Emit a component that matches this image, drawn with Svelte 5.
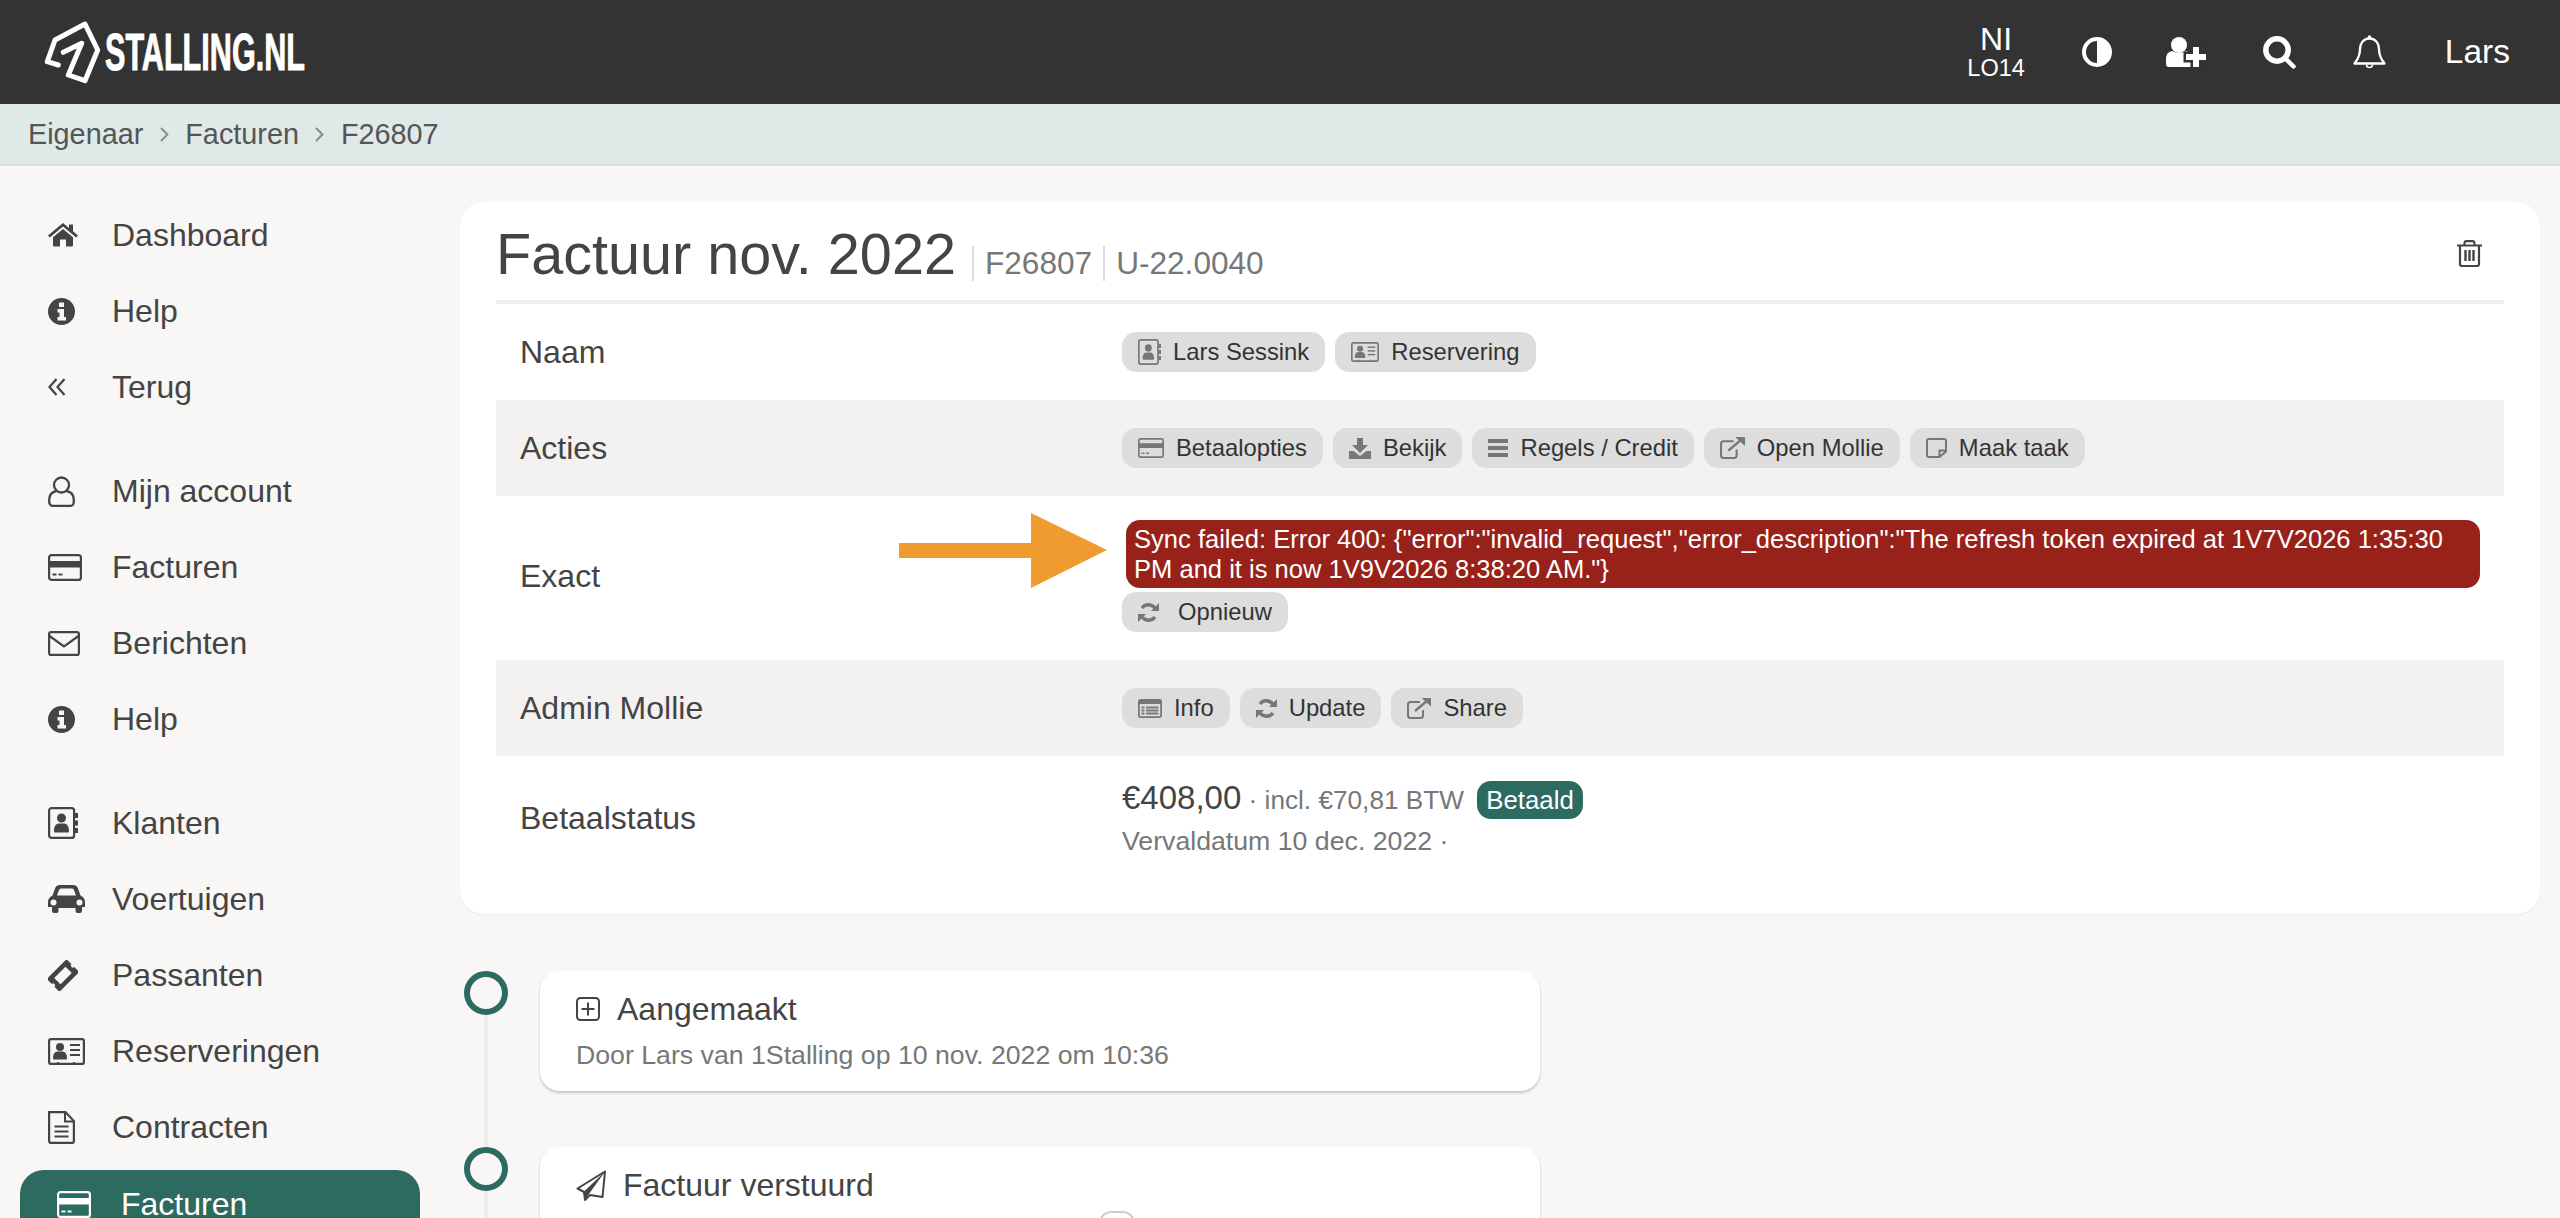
<script>
  const bg = '#f8f7f5';
  const icons = {
    home: [30, 24, `<path d="M15 0 0 12.5l1.8 2.1L15 3.6l13.2 11 1.8-2.1-5-4.2V1.500h-4v3.400z"/><path d="M15 6 5 14.300V22.500a1 1 0 0 0 1 1h6v-7h6v7h6a1 1 0 0 0 1-1V14.300z"/>`],
    info: [27, 27, `<circle cx="13.500" cy="13.500" r="13.500"/><rect x="11" y="4.500" width="5" height="4.500" fill="${bg}"/><path fill="${bg}" d="M9.500 11H16v8h2v3.500H9.500V19h2v-4.500h-2z"/>`],
    back: [18, 18, `<path fill="none" stroke="currentColor" stroke-width="2.200" d="M8.500 1 1.500 9l7 8M16.500 1l-7 8 7 8"/>`],
    user: [27, 31, `<g fill="none" stroke="currentColor" stroke-width="2.300"><circle cx="13.500" cy="9" r="7.500"/><path d="M8.500 15C3 16 1.200 20 1.200 24v2a4 4 0 0 0 4 4h16.600a4 4 0 0 0 4-4v-2c0-4-1.800-8-7.300-9"/></g>`],
    card: [34, 27, `<rect x="1.100" y="1.100" width="31.800" height="24.800" rx="2.500" fill="none" stroke="currentColor" stroke-width="2.200"/><rect x="1" y="7" width="32" height="6.500"/><rect x="4.500" y="19.500" width="4" height="2"/><rect x="10.500" y="19.500" width="4" height="2"/>`],
    mail: [32, 25, `<rect x="1.100" y="1.100" width="29.800" height="22.800" rx="2" fill="none" stroke="currentColor" stroke-width="2.200"/><path fill="none" stroke="currentColor" stroke-width="2.200" d="M1.500 5 16 15.500 30.500 5"/>`],
    book: [30, 32, `<rect x="1.100" y="1.100" width="25" height="29.800" rx="2.500" fill="none" stroke="currentColor" stroke-width="2.200"/><rect x="27" y="6" width="3" height="5"/><rect x="27" y="13.500" width="3" height="5"/><rect x="27" y="21" width="3" height="5"/><circle cx="13.500" cy="11" r="4.500"/><path d="M6 24c0-6 3-7 4-7.500h7c1 .5 4 1.500 4 7.500q0 1.500-1 1.500H7q-1 0-1-1.500z"/>`],
    car: [37, 28, `<path d="M7 3.500Q8 0 12 0h13q4 0 5 3.500l2.500 7q4.500 2 4.500 6.500v5h-3v4q0 2-2 2h-2.500q-2 0-2-2v-3H10.500v3q0 2-2 2H6q-2 0-2-2v-4H0v-5q0-4.500 4.500-6.500z"/><path fill="${bg}" d="M9 10.500 11 5q.4-1.500 2-1.500h11q1.600 0 2 1.500l2 5.500z"/><circle cx="5.500" cy="17.500" r="3" fill="${bg}"/><circle cx="31.500" cy="17.500" r="3" fill="${bg}"/>`],
    ticket: [30, 31, `<g transform="rotate(-45 15 15.500)"><rect x="1" y="6.500" width="28" height="18" rx="1.500"/><rect x="7" y="11" width="16" height="9" fill="${bg}"/><circle cx="1" cy="15.500" r="2" fill="${bg}"/><circle cx="29" cy="15.500" r="2" fill="${bg}"/></g>`],
    idcard: [37, 27, `<rect x="1.100" y="1.100" width="34.800" height="24.800" rx="2" fill="none" stroke="currentColor" stroke-width="2.200"/><circle cx="12" cy="9" r="4"/><path d="M5 20c0-5 2.500-6 4-6.500h6c1.500.5 4 1.500 4 6.500q0 1.500-1 1.500H6q-1 0-1-1.500z"/><rect x="22" y="6" width="10" height="2"/><rect x="22" y="11" width="10" height="2"/><rect x="22" y="16" width="10" height="2"/><rect x="9" y="24" width="2" height="3"/><rect x="25" y="24" width="2" height="3"/>`],
    file: [27, 33, `<path fill="none" stroke="currentColor" stroke-width="2.200" d="M1.100 1.100h16.400l8.400 9v20a1.800 1.800 0 0 1-1.800 1.800H2.900a1.800 1.800 0 0 1-1.800-1.800z"/><path fill="none" stroke="currentColor" stroke-width="2" d="M17 1.500V10.500h8.500M6.500 15.500h14M6.500 20.500h14M6.500 25.500h14"/>`],
    contrast: [30, 30, `<circle cx="15" cy="15" r="15"/><path fill="#333" d="M15 4a11 11 0 0 0 0 22z"/>`],
    userplus: [40, 30, `<circle cx="13" cy="8" r="8"/><path d="M0 27v-5q0-7 6-8 7 4 14 0 6 1 6 8v8H3q-3 0-3-3z"/><path stroke="#333" stroke-width="5" paint-order="stroke" d="M27 10h6v7h7v6h-7v7h-6v-7h-7v-6h7z"/>`],
    search: [33, 33, `<g fill="none" stroke="currentColor"><circle cx="14" cy="14" r="11.200" stroke-width="5.500"/><path stroke-width="4.500" stroke-linecap="round" d="M23 23l7.500 7.500"/></g>`],
    bell: [33, 35, `<circle cx="16.500" cy="2" r="1.800"/><path fill="none" stroke="currentColor" stroke-width="2.300" stroke-linejoin="round" d="M16.500 3.500C10 3.500 7 9 7 14c0 8-3 11-5.500 14.500h30C29 25 26 22 26 14c0-5-3-10.500-9.500-10.500z"/><path fill="none" stroke="currentColor" stroke-width="1.600" d="M13.500 29.500a3 3 0 0 0 6 0"/>`],
    trash: [25, 27, `<g fill="none" stroke="currentColor" stroke-width="2.200"><path d="M0 5.500h25M7.500 5V3.200q0-2.100 2.100-2.100h5.800q2.100 0 2.100 2.100V5"/><path d="M3 5.500v18.500q0 2 2 2h15q2 0 2-2V5.500"/><path stroke-width="2.400" d="M8.500 10v11M12.500 10v11M16.500 10v11"/></g>`],
    download: [22, 21, `<path d="M8 0h6v7h5l-8 8-8-8h5z"/><path d="M0 13h4.500l6.500 5 6.500-5H22v8H0z"/>`],
    bars: [20, 18, `<rect width="20" height="4"/><rect y="7" width="20" height="4"/><rect y="14" width="20" height="4"/>`],
    open: [24, 21, `<g fill="none" stroke="currentColor" stroke-width="2"><path d="M13 4H3.500Q1 4 1 6.500V17.500Q1 20 3.500 20h10q2.500 0 2.500-2.500V12"/><path stroke-width="2.400" d="M8 13 21 2"/></g><path d="M14.500 0H24v8.500z"/>`],
    note: [21, 20, `<path fill="none" stroke="currentColor" stroke-width="2" d="M1 3q0-2 2-2h15q2 0 2 2v10.500L13.500 19H3q-2 0-2-2zM20 12.500h-6.500V19"/>`],
    refresh: [21, 21, `<g fill="none" stroke="currentColor" stroke-width="3.500"><path d="M18 8.500A8 8 0 0 0 4 6"/><path d="M3 12.500A8 8 0 0 0 17 15"/></g><path d="M21 1v8h-8zM0 20v-8h8z"/>`],
    list: [24, 19, `<rect x=".9" y=".9" width="22.200" height="17.200" rx="1.500" fill="none" stroke="currentColor" stroke-width="1.800"/><rect x="1" y="1" width="22" height="4"/><path d="M3.500 7.500h3v2h-3zM8 7.500h12.500v2H8zM3.500 10.500h3v2h-3zM8 10.500h12.500v2H8zM3.500 13.500h3v2h-3zM8 13.500h12.500v2H8z"/>`],
    plus: [24, 24, `<rect x="1" y="1" width="22" height="22" rx="3.500" fill="none" stroke="currentColor" stroke-width="2"/><path fill="none" stroke="currentColor" stroke-width="2" d="M12 5.500v13M5.500 12h13"/>`],
    plane: [30, 31, `<path fill="none" stroke="currentColor" stroke-width="2" stroke-linejoin="round" d="M29 1.500 1.500 18.500 8 22l1 8 5-5 12.500 2z"/><path d="M29 1.500 7.500 22 9 30l4-6z"/>`]
  };

  const nav = [
    [['home', 'Dashboard'], ['info', 'Help'], ['back', 'Terug']],
    [['user', 'Mijn account'], ['card', 'Facturen'], ['mail', 'Berichten'], ['info', 'Help']],
    [['book', 'Klanten'], ['car', 'Voertuigen'], ['ticket', 'Passanten'], ['idcard', 'Reserveringen'], ['file', 'Contracten']]
  ];
  const naam = [['book', 23, 26, 'Lars Sessink'], ['idcard', 28, 20, 'Reservering']];
  const acties = [['card', 26, 20, 'Betaalopties'], ['download', 22, 21, 'Bekijk'], ['bars', 20, 18, 'Regels / Credit'], ['open', 25, 22, 'Open Mollie'], ['note', 21, 20, 'Maak taak']];
  const mollie = [['list', 24, 19, 'Info'], ['refresh', 21, 21, 'Update'], ['open', 24, 21, 'Share']];
  const error = 'Sync failed: Error 400: {"error":"invalid_request","error_description":"The refresh token expired at 1V7V2026 1:35:30 PM and it is now 1V9V2026 8:38:20 AM."}';
</script>

{#snippet icon(name, w, h)}
  <svg class="ic" width={w ?? icons[name][0]} height={h ?? icons[name][1]} viewBox="0 0 {icons[name][0]} {icons[name][1]}" fill="currentColor" preserveAspectRatio="none">{@html icons[name][2]}</svg>
{/snippet}

{#snippet btn(b)}
  <span class="btn">{@render icon(b[0], b[1], b[2])}<span>{b[3]}</span></span>
{/snippet}

<div class="page">
  <header class="top">
    <svg class="logo" width="58" height="65" viewBox="44 20 58 65" fill="none" stroke="#fff" stroke-width="5" stroke-linejoin="round" stroke-linecap="round">
      <path d="M58.300 65 47.300 61.700 55 40 85 24l12.700 26L85 80.700 68.300 75l13.400-31.700-18.400 9"/>
    </svg>
    <span class="brand">STALLING.NL</span>
    <div class="tools">
      <div class="loc"><span class="ni">NI</span><span class="lo">LO14</span></div>
      <span class="half">{@render icon('contrast')}</span>
      {@render icon('userplus')}
      {@render icon('search')}
      <span class="bell">{@render icon('bell')}</span>
      <span class="who">Lars</span>
    </div>
  </header>

  <nav class="crumbs">
    <span>Eigenaar</span>
    <svg class="chev" width="9" height="15" viewBox="0 0 9 15"><path d="M1 1l6.500 6.500L1 14" fill="none" stroke="#888" stroke-width="1.800"/></svg>
    <span>Facturen</span>
    <svg class="chev" width="9" height="15" viewBox="0 0 9 15"><path d="M1 1l6.500 6.500L1 14" fill="none" stroke="#888" stroke-width="1.800"/></svg>
    <span>F26807</span>
  </nav>

  <div class="body">
    <aside class="side">
      {#each nav as group}
        <ul class="group">
          {#each group as item}
            <li class="item"><span class="slot">{@render icon(item[0])}</span>{item[1]}</li>
          {/each}
        </ul>
      {/each}
      <div class="item active"><span class="slot">{@render icon('card')}</span>Facturen</div>
    </aside>

    <main class="content">
      <section class="sheet">
        <div class="head">
          <h1>Factuur nov. 2022</h1>
          <span class="code first">F26807</span>
          <span class="code">U-22.0040</span>
          <span class="del">{@render icon('trash')}</span>
        </div>

        <div class="row">
          <div class="label">Naam</div>
          <div class="val btns">{#each naam as b}{@render btn(b)}{/each}</div>
        </div>
        <div class="row alt">
          <div class="label">Acties</div>
          <div class="val btns">{#each acties as b}{@render btn(b)}{/each}</div>
        </div>
        <div class="row exact">
          <div class="label">Exact</div>
          <div class="val">
            <div class="err">{error}</div>
            <span class="btn retry">{@render icon('refresh')}<span>Opnieuw</span></span>
          </div>
          <svg class="arrow" width="208" height="75" viewBox="0 0 208 75"><path d="M0 30h132V0l76 37-76 38V45H0z" fill="#ef9b30"/></svg>
        </div>
        <div class="row alt">
          <div class="label">Admin Mollie</div>
          <div class="val btns">{#each mollie as b}{@render btn(b)}{/each}</div>
        </div>
        <div class="row status">
          <div class="label">Betaalstatus</div>
          <div class="val">
            <div class="amount"><span class="big">€408,00</span> · incl. €70,81 BTW <span class="badge">Betaald</span></div>
            <div class="due">Vervaldatum 10 dec. 2022 ·</div>
          </div>
        </div>
      </section>

      <div class="timeline">
        <div class="event">
          <div class="rail"><span class="dot"></span><span class="line"></span></div>
          <div class="ev">
            <div class="ev-title">{@render icon('plus')}<span>Aangemaakt</span></div>
            <div class="ev-sub">Door Lars van 1Stalling op 10 nov. 2022 om 10:36</div>
          </div>
        </div>
        <div class="event">
          <div class="rail"><span class="dot"></span><span class="line"></span></div>
          <div class="ev">
            <div class="ev-title">{@render icon('plane')}<span>Factuur verstuurd</span></div>
            <div class="ev-extra"><span class="pill"></span></div>
          </div>
        </div>
      </div>
    </main>
  </div>
</div>

<style>
  :global(body) { margin: 0; overflow: hidden; background: #f8f7f5; }
  .page { width: 2560px; height: 1218px; overflow: hidden; font-family: "Liberation Sans", Arial, sans-serif; color: #444; background: #f8f7f5; }
  .ic { display: block; flex: none; }

  .top { height: 104px; background: #333; color: #fff; display: flex; align-items: center; padding: 0 50px 0 44px; box-sizing: border-box; }
  .logo { flex: none; }
  .brand { font-weight: 700; font-size: 51px; line-height: 1; transform: scaleX(.6); transform-origin: left center; margin-left: 3px; -webkit-text-stroke: 1px #fff; }
  .tools { margin-left: auto; display: flex; align-items: center; gap: 57px; }
  .loc { display: flex; flex-direction: column; align-items: center; }
  .ni { font-size: 32px; line-height: 32px; }
  .lo { font-size: 23.500px; line-height: 26px; }
  .half { margin-right: -3px; }
  .bell { margin-right: 2px; }
  .who { font-size: 33.500px; }

  .crumbs { height: 60px; box-sizing: content-box; background: #dee9e8; border-bottom: 2px solid #e0e0e0; display: flex; align-items: center; padding-left: 28px; font-size: 28.800px; color: #555; gap: 16.500px; }

  .body { display: flex; align-items: flex-start; }
  .side { width: 460px; flex: none; padding-top: 31px; box-sizing: border-box; }
  .group { list-style: none; margin: 0 0 28px; padding: 0; }
  .group:last-of-type { margin-bottom: 5px; }
  .item { height: 76px; display: flex; align-items: center; padding-left: 48px; font-size: 32px; color: #444; }
  .slot { width: 64px; flex: none; display: block; }
  .active { margin-left: 20px; width: 400px; height: 68px; box-sizing: border-box; padding-left: 37px; background: #2d6a60; color: #fff; border-radius: 24px 24px 0 0; }

  .content { width: 2080px; padding-top: 36px; }
  .sheet { background: #fff; border-radius: 24px; padding: 0 36px 38px; box-shadow: 0 1px 2px rgba(0,0,0,.06); }
  .head { display: flex; align-items: baseline; padding: 20px 0 14px; border-bottom: 4px solid #eee; }
  h1 { margin: 0; font-weight: 400; font-size: 57.600px; line-height: 64px; color: #444; }
  .code { font-size: 31.600px; line-height: 35px; color: #777; border-left: 2px solid #ddd; padding-left: 11px; margin-left: 11px; }
  .first { margin-left: 16px; }
  .del { margin-left: auto; margin-right: 22px; align-self: flex-start; margin-top: 18px; color: #444; }

  .row { display: flex; align-items: center; min-height: 96px; font-size: 32px; position: relative; }
  .alt { background: #f3f2f0; }
  .label { width: 626px; flex: none; box-sizing: border-box; padding-left: 24px; color: #444; }
  .val { flex: 1; min-width: 0; }
  .btns { display: flex; gap: 10px; }
  .btn { display: inline-flex; align-items: center; gap: 12px; height: 40px; padding: 0 16px; border-radius: 14px; background: #ddd; color: #333; font-size: 23.800px; box-sizing: border-box; }
  .btn :global(.ic) { color: #777; }
  .retry { gap: 19px; margin-top: 4px; display: flex; width: fit-content; }

  .exact { padding: 24px 0 28px; }
  .err { margin: 0 24px 0 4px; padding: 4px 8px; background: #98211a; color: #fff; font-size: 25.550px; line-height: 30px; border-radius: 14px; }
  .arrow { position: absolute; left: 403px; top: 17px; }

  .status { padding: 23px 0 18px; min-height: 0; }
  .amount { font-size: 26.200px; color: #777; line-height: 38px; }
  .big { font-size: 33px; color: #444; }
  .badge { display: inline-block; margin-left: 6px; padding: 0 9px; font-size: 25.800px; background: #2d6a60; color: #fff; border-radius: 14px; line-height: 38px; }
  .due { font-size: 26.700px; color: #777; line-height: 34px; margin-top: 5px; }

  .timeline { margin: 57px 0 0 4px; }
  .event { display: flex; gap: 32px; }
  .rail { width: 44px; flex: none; display: flex; flex-direction: column; align-items: center; }
  .dot { width: 44px; height: 44px; box-sizing: border-box; border: 6px solid #2d6a60; border-radius: 50%; flex: none; }
  .line { width: 4px; flex: 1; background: #eee; }
  .ev { width: 1000px; height: 120px; box-sizing: border-box; margin-bottom: 56px; padding: 22px 36px 20px; background: #fff; border-radius: 20px; box-shadow: 0 2px 3px rgba(0,0,0,.2); }
  .ev-title { display: flex; align-items: center; gap: 17px; font-size: 32px; line-height: 32px; color: #444; }
  .ev-sub { font-size: 26.700px; line-height: 34px; color: #777; margin-top: 13px; }
  .ev-extra { margin-top: 10px; }
  .pill { display: block; margin-left: 523px; width: 36px; height: 40px; box-sizing: border-box; border: 2px solid #ccc; border-radius: 12px; }
</style>
